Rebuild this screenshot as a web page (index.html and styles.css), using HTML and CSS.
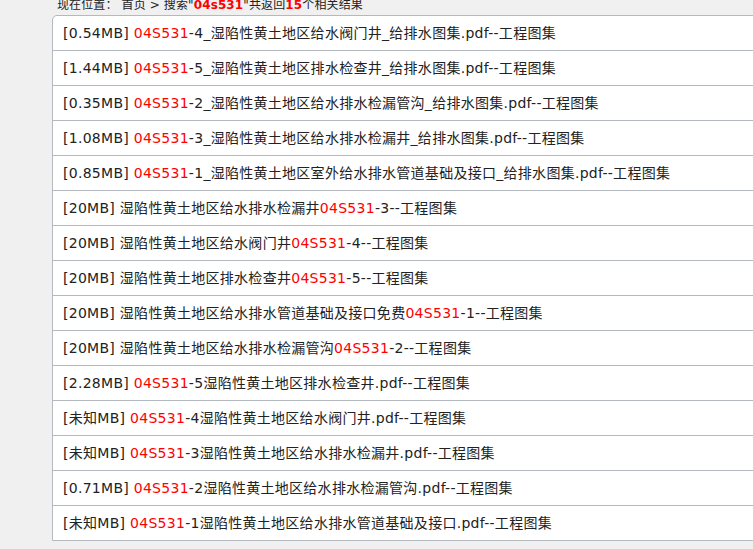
FILE: index.html
```html
<!DOCTYPE html>
<html lang="zh-CN">
<head>
    <meta charset="UTF-8">
    <title>搜索结果</title>
    <link rel="stylesheet" href="styles.css">
</head>
<body>

    <div class="position">
        现在位置： 首页 &gt; 搜索"<b>04s531</b>"共返回<b>15</b>个相关结果
    </div>

    <ul class="result-list">
        <li>[0.54MB] <span class="key">04S531</span>-4_湿陷性黄土地区给水阀门井_给排水图集.pdf--工程图集</li>
        <li>[1.44MB] <span class="key">04S531</span>-5_湿陷性黄土地区排水检查井_给排水图集.pdf--工程图集</li>
        <li>[0.35MB] <span class="key">04S531</span>-2_湿陷性黄土地区给水排水检漏管沟_给排水图集.pdf--工程图集</li>
        <li>[1.08MB] <span class="key">04S531</span>-3_湿陷性黄土地区给水排水检漏井_给排水图集.pdf--工程图集</li>
        <li>[0.85MB] <span class="key">04S531</span>-1_湿陷性黄土地区室外给水排水管道基础及接口_给排水图集.pdf--工程图集</li>
        <li>[20MB] 湿陷性黄土地区给水排水检漏井<span class="key">04S531</span>-3--工程图集</li>
        <li>[20MB] 湿陷性黄土地区给水阀门井<span class="key">04S531</span>-4--工程图集</li>
        <li>[20MB] 湿陷性黄土地区排水检查井<span class="key">04S531</span>-5--工程图集</li>
        <li>[20MB] 湿陷性黄土地区给水排水管道基础及接口免费<span class="key">04S531</span>-1--工程图集</li>
        <li>[20MB] 湿陷性黄土地区给水排水检漏管沟<span class="key">04S531</span>-2--工程图集</li>
        <li>[2.28MB] <span class="key">04S531</span>-5湿陷性黄土地区排水检查井.pdf--工程图集</li>
        <li>[未知MB] <span class="key">04S531</span>-4湿陷性黄土地区给水阀门井.pdf--工程图集</li>
        <li>[未知MB] <span class="key">04S531</span>-3湿陷性黄土地区给水排水检漏井.pdf--工程图集</li>
        <li>[0.71MB] <span class="key">04S531</span>-2湿陷性黄土地区给水排水检漏管沟.pdf--工程图集</li>
        <li>[未知MB] <span class="key">04S531</span>-1湿陷性黄土地区给水排水管道基础及接口.pdf--工程图集</li>
    </ul>

</body>
</html>
```

FILE: styles.css
```css
body {
    margin: 0;
    padding: 0;
    background: #f0f0f0;
    font-family: "DejaVu Sans", "Noto Sans CJK SC", sans-serif;
    color: #222;
    overflow: hidden;
}

.position {
    font-size: 12px;
    line-height: 12px;
    height: 16px;
    margin-top: -1px;
    padding-left: 57px;
    letter-spacing: 0.12px;
    white-space: nowrap;
}

.position b {
    color: #ff0000;
}

.result-list {
    list-style: none;
    margin: 0 0 0 52px;
    padding: 0;
    width: 760px;
    background: #fff;
    border: 1px solid #b4b8bf;
    border-radius: 5px 0 0 0;
}

.result-list li {
    height: 34px;
    line-height: 35px;
    padding-left: 10px;
    font-size: 14px;
    letter-spacing: 0.28px;
    white-space: nowrap;
    border-bottom: 1px solid #b4b8bf;
}

.result-list li:last-child {
    border-bottom: none;
}

.key {
    color: #ff0000;
}
```
